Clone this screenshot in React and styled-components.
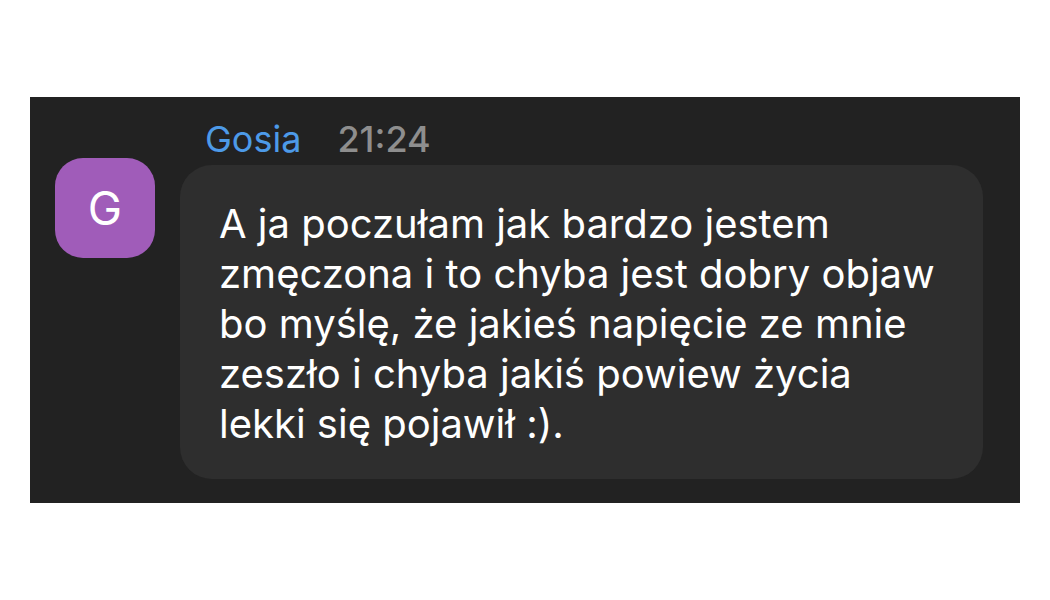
import React from 'react';
import styled, { createGlobalStyle } from 'styled-components';

const GlobalStyle = createGlobalStyle`
  html, body {
    margin: 0;
    padding: 0;
    background: #ffffff;
  }
  body {
    font-family: Inter, "Liberation Sans", Arial, sans-serif;
    -webkit-font-smoothing: antialiased;
  }
`;

const Page = styled.div`
  width: 1050px;
  height: 600px;
  padding: 97px 30px 0 30px;
  box-sizing: border-box;
`;

const Panel = styled.div`
  display: flex;
  align-items: flex-start;
  gap: 25px;
  width: 990px;
  height: 406px;
  box-sizing: border-box;
  padding: 20px 37px 24px 25px;
  background: #222222;
`;

const Avatar = styled.div`
  flex: 0 0 100px;
  height: 100px;
  margin-top: 41px;
  border-radius: 28px;
  background: #a05cb9;
  color: #ffffff;
  display: flex;
  align-items: center;
  justify-content: center;
  font-size: 46px;
  font-weight: 400;
`;

const Column = styled.div`
  flex: 1;
  display: flex;
  flex-direction: column;
  gap: 4px;
`;

const Header = styled.div`
  display: flex;
  align-items: baseline;
  gap: 36px;
  padding-left: 25px;
  height: 44px;
  line-height: 44px;
  font-size: 36px;
`;

const Name = styled.span`
  color: #4d9ae8;
`;

const Time = styled.span`
  color: #8e8e8e;
  font-weight: 500;
`;

const Bubble = styled.div`
  background: #2e2e2e;
  border-radius: 32px;
  padding: 34px 44px 30px 39px;
  color: #ffffff;
  font-size: 40px;
  line-height: 50px;
`;

export default function App() {
  return (
    <>
      <GlobalStyle />
      <Page>
        <Panel>
          <Avatar>G</Avatar>
          <Column>
            <Header>
              <Name>Gosia</Name>
              <Time>21:24</Time>
            </Header>
            <Bubble>
              A ja poczułam jak bardzo jestem zmęczona i to chyba jest dobry objaw bo
              myślę, że jakieś napięcie ze mnie zeszło i chyba jakiś powiew życia lekki
              się pojawił :).
            </Bubble>
          </Column>
        </Panel>
      </Page>
    </>
  );
}
